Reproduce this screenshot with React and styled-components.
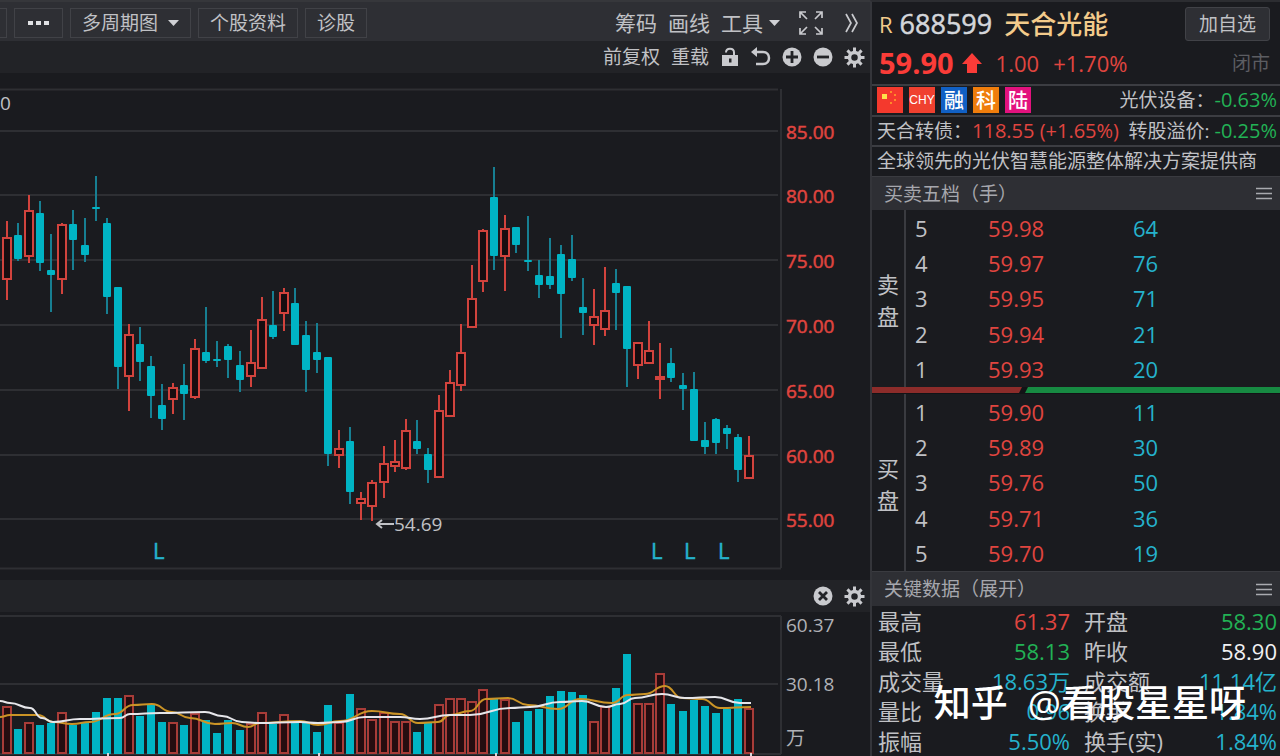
import React from "react";
import styled, { createGlobalStyle } from "styled-components";

const color = {
  bg: "#1a1b1f",
  bar: "#2e2f34",
  strip: "#222327",
  line: "#2e2f33",
  edge: "#3c3d42",
  text: "#c0c1c5",
  muted: "#a6a7ad",
  dim: "#5c5d62",
  red: "#e0453f",
  hot: "#fa3c38",
  green: "#22b255",
  cyan: "#25b2cc",
  fill: "#00b4c4",
  gold: "#f3cb8b",
};

const GlobalStyle = createGlobalStyle`
  *, *::before, *::after { box-sizing: border-box; }
  body {
    margin: 0;
    background: ${color.bg};
    color: ${color.text};
    font-family: "Open Sans", "Noto Sans CJK SC", sans-serif;
    font-size: 19px;
    line-height: 24px;
  }
  button {
    margin: 0;
    padding: 0;
    border: 0;
    background: none;
    color: inherit;
    font: inherit;
    white-space: nowrap;
    cursor: pointer;
  }
  svg { display: block; }
`;

const Page = styled.div`
  position: relative;
  display: grid;
  grid-template-columns: minmax(0, 1fr) 410px;
  min-height: 100vh;
  overflow: hidden;
`;

const ChartPane = styled.main`
  min-width: 0;
`;

const Toolbar = styled.div`
  display: flex;
  align-items: center;
  justify-content: space-between;
  height: 41px;
  padding-top: 3px;
  background: ${color.bar};
  border-top: 2px solid #36373b;
`;

const ToolGroup = styled.div`
  display: flex;
  align-items: center;
  gap: ${(p) => p.$gap}px;
  padding-right: ${(p) => p.$end || 0}px;
`;

const BoxButton = styled.button`
  display: flex;
  align-items: center;
  justify-content: center;
  gap: 10px;
  height: 30px;
  padding: 0 11px;
  border: 1px solid #414247;
  color: ${color.text};
`;

const CutButton = styled(BoxButton)`
  width: 7px;
  padding: 0;
  border-left: 0;
`;

const TextButton = styled.button`
  display: flex;
  align-items: center;
  gap: 6px;
  font-size: ${(p) => (p.$large ? 21 : 19)}px;
  color: ${color.text};
`;

const Strip = styled.div`
  display: flex;
  align-items: center;
  justify-content: flex-end;
  gap: 11px;
  height: 32px;
  padding-right: 5px;
  background: ${color.strip};
`;

const IconButton = styled.button`
  display: grid;
  place-items: center;
  color: #c9cace;
`;

const Chart = styled.svg`
  width: 100%;
  height: auto;
  font-family: "Open Sans", "Noto Sans CJK SC", sans-serif;
`;

const Quote = styled.aside`
  border-left: 2px solid #34353a;
  border-top: 2px solid #2c2d31;
`;

const QuoteHead = styled.header`
  height: 82px;
  padding: 2px 10px 0 7px;
`;

const HeadRow = styled.div`
  display: flex;
  align-items: center;
  height: 39px;
  white-space: nowrap;
`;

const Flag = styled.span`
  font-size: 22px;
  color: ${color.gold};
`;

const Code = styled.span`
  margin-left: 7px;
  font-size: 27px;
  color: #d4d6da;
  -webkit-text-stroke: 0.5px currentColor;
`;

const Name = styled.h1`
  margin: 0 auto 0 12px;
  font-size: 26px;
  font-weight: 500;
  color: ${color.gold};
`;

const AddButton = styled.button`
  height: 34px;
  padding: 0 13px;
  border: 1px solid #414247;
  border-radius: 3px;
  background: ${color.bar};
  color: ${color.text};
`;

const Last = styled.strong`
  margin-right: 8px;
  font-size: 29px;
  font-weight: 700;
  color: ${color.hot};
`;

const Change = styled.span`
  margin-left: 14px;
  font-size: 22px;
  color: ${color.red};
`;

const Status = styled.span`
  margin-left: auto;
  color: ${color.dim};
`;

const InfoRow = styled.div`
  display: flex;
  align-items: center;
  justify-content: space-between;
  height: ${(p) => (p.$tall ? 31 : 30)}px;
  padding: 0 3px 1px 5px;
  border-top: 2px solid ${color.edge};
  white-space: nowrap;
`;

const Badges = styled.div`
  display: flex;
  gap: 6px;
`;

const Badge = styled.span`
  width: 26px;
  height: 26px;
  background: ${(p) => p.$bg};
  color: #fff;
  font-family: ${(p) => (p.$latin ? '"Liberation Sans Narrow", "Liberation Sans"' : '"Noto Sans CJK SC"')}, sans-serif;
  font-size: ${(p) => (p.$latin ? 12 : 20)}px;
  font-weight: ${(p) => (p.$latin ? 400 : 500)};
  line-height: 26px;
  text-align: center;
`;

const Num = styled.span`
  font-size: 20px;
  color: ${(p) => color[p.$tone]};
`;

const SectionBar = styled.div`
  display: flex;
  align-items: center;
  justify-content: space-between;
  height: ${(p) => (p.$tall ? 35 : 34)}px;
  padding: 0 8px 0 12px;
  border-top: 1px solid #3a3b40;
  background: ${color.bar};
`;

const SectionTitle = styled.h2`
  margin: 0;
  font-size: 19px;
  font-weight: 400;
  color: ${color.muted};
`;

const Side = styled.section`
  display: grid;
  grid-template-columns: 34px minmax(0, 1fr);
  height: 177px;
`;

const SideName = styled.div`
  display: flex;
  flex-direction: column;
  justify-content: center;
  align-items: center;
  padding-top: 2px;
  border-right: 2px solid #3a3b40;
  font-size: 22px;
  line-height: 32px;
`;

const Book = styled.table`
  width: 100%;
  border-collapse: collapse;
  table-layout: fixed;
  font-size: 22px;
`;

const Cell = styled.td`
  height: 35px;
  padding: 0 0 0 ${(p) => p.$pad || 0}px;
  width: ${(p) => (p.$w ? `${p.$w}px` : "auto")};
  color: ${(p) => color[p.$tone]};
`;

const Ratio = styled.div`
  display: flex;
  height: 7px;
  padding-bottom: 1px;
  background: #121316;
`;

const RatioPart = styled.div`
  flex: ${(p) => p.$share} 1 0;
  background: ${(p) => p.$bg};
  clip-path: ${(p) =>
    p.$lead
      ? "polygon(0 0, 100% 0, calc(100% - 3px) 100%, 0 100%)"
      : "polygon(6px 0, 100% 0, 100% 100%, 3px 100%)"};
`;

const Stats = styled.table`
  width: 100%;
  border-collapse: collapse;
  table-layout: fixed;
  font-size: 22px;
  white-space: nowrap;
`;

const StatName = styled.th`
  width: ${(p) => p.$w}px;
  height: 30px;
  padding: 0 0 1px 6px;
  font-weight: 400;
  text-align: left;
`;

const StatValue = styled.td`
  padding: 0 ${(p) => p.$end}px 1px 0;
  text-align: right;
  color: ${(p) => color[p.$tone] || "#f1f1f3"};
`;

const Watermark = styled.div`
  position: absolute;
  right: 34px;
  bottom: 29px;
  display: flex;
  gap: 20px;
  font-size: 37px;
  font-weight: 500;
  line-height: 48px;
  color: #fff;
  white-space: nowrap;
  pointer-events: none;
`;

/* [rising, high, body top, body bottom, low, volume top] */
const days = [
  [1, 221, 237, 279, 300, 707], [0, 223, 235, 259, 261, 729], [1, 195, 210, 256, 263, 723],
  [0, 201, 213, 263, 271, 725], [0, 234, 270, 275, 312, 723], [1, 223, 224, 279, 294, 713],
  [0, 210, 224, 240, 270, 725], [0, 218, 245, 255, 262, 723], [0, 176, 207, 209, 221, 712],
  [0, 218, 223, 297, 314, 698], [0, 287, 287, 367, 389, 698], [1, 324, 334, 376, 411, 696],
  [0, 327, 344, 362, 381, 716], [0, 356, 366, 396, 418, 704], [0, 384, 405, 419, 430, 722],
  [1, 383, 387, 399, 414, 723], [0, 364, 385, 394, 420, 725], [1, 339, 348, 397, 399, 714],
  [0, 307, 352, 361, 363, 720], [0, 341, 359, 361, 367, 733], [0, 344, 346, 360, 378, 720],
  [0, 351, 365, 380, 392, 730], [1, 330, 362, 376, 387, 724], [1, 297, 319, 368, 368, 713],
  [0, 291, 325, 337, 339, 724], [1, 288, 292, 313, 331, 715], [0, 288, 303, 345, 345, 722],
  [0, 321, 335, 370, 392, 723], [0, 323, 352, 360, 373, 732], [0, 357, 357, 454, 466, 705],
  [1, 430, 448, 455, 468, 723], [0, 427, 441, 492, 504, 694], [1, 492, 498, 503, 520, 709],
  [1, 480, 482, 506, 521, 720], [1, 446, 463, 482, 498, 713], [1, 440, 461, 466, 472, 722],
  [1, 419, 430, 468, 470, 722], [0, 420, 441, 449, 454, 732], [0, 448, 454, 470, 483, 722],
  [1, 395, 410, 477, 477, 705], [1, 370, 382, 416, 416, 699], [1, 324, 352, 385, 391, 699],
  [1, 265, 298, 327, 327, 702], [1, 229, 230, 281, 292, 690], [0, 167, 197, 256, 270, 698],
  [1, 215, 228, 256, 291, 700], [0, 227, 227, 245, 253, 722], [0, 216, 260, 262, 271, 711],
  [0, 260, 275, 285, 298, 709], [0, 238, 276, 285, 289, 696], [0, 245, 254, 294, 338, 691],
  [0, 235, 259, 278, 281, 692], [0, 278, 307, 313, 335, 695], [1, 289, 316, 325, 345, 722],
  [1, 267, 310, 329, 336, 707], [0, 269, 283, 293, 330, 688], [0, 286, 286, 349, 387, 654],
  [1, 342, 342, 365, 379, 704], [1, 321, 350, 363, 363, 704], [1, 343, 376, 379, 399, 674],
  [0, 348, 363, 378, 382, 704], [0, 373, 385, 389, 410, 711], [0, 372, 389, 441, 441, 700],
  [0, 422, 440, 447, 454, 706], [0, 418, 419, 443, 454, 713], [0, 425, 428, 434, 449, 709],
  [0, 434, 437, 470, 482, 699], [1, 436, 455, 478, 478, 709],
];
const dayX = (i) => Math.round(7 + (i * 742) / 67);

const whiteAverage = [
  [0, 701], [10, 703], [30, 708], [42, 718], [53, 722], [80, 719], [120, 718], [130, 714], [160, 713],
  [205, 712], [222, 716], [242, 722], [258, 723], [300, 722], [318, 723], [340, 722], [365, 717],
  [400, 717], [420, 719], [450, 715], [470, 715], [510, 708], [530, 707], [560, 702], [582, 701],
  [606, 707], [620, 704], [635, 698], [662, 694], [685, 698], [715, 697], [740, 703], [751, 703],
];
const goldAverage = [
  [0, 717], [10, 715], [38, 715], [53, 722], [72, 724], [90, 722], [115, 714], [133, 705], [152, 704],
  [172, 712], [190, 718], [215, 724], [232, 723], [248, 727], [260, 723], [300, 721], [318, 725],
  [340, 721], [372, 711], [400, 714], [418, 723], [438, 722], [450, 715], [470, 711], [486, 699],
  [508, 698], [528, 705], [558, 709], [580, 699], [612, 703], [628, 695], [645, 694], [665, 686],
  [682, 698], [702, 699], [720, 708], [751, 707],
];

const smooth = (pts) =>
  pts.reduce((d, [x, y], i) => {
    if (i === 0) return `M${x} ${y}`;
    const [px, py] = pts[i - 1];
    const mx = (px + x) / 2;
    return `${d}C${mx} ${py} ${mx} ${y} ${x} ${y}`;
  }, "");

const prices = [
  [131, "85.00"], [195, "80.00"], [260, "75.00"], [325, "70.00"],
  [390, "65.00"], [455, "60.00"], [519, "55.00"],
];

function Candle({ x, day }) {
  const [up, high, top, bottom, low] = day;
  if (up) {
    const flat = bottom - top < 4;
    return (
      <g stroke="#d2433d" strokeWidth="2" fill="none">
        <path d={`M${x} ${high}V${top}M${x} ${bottom}V${low}`} />
        <rect x={x - 4} y={top + 1} width="8" height={Math.max(bottom - top - 1, 1)} fill={flat ? color.hot : "#170d10"} />
      </g>
    );
  }
  return (
    <g>
      <path d={`M${x} ${high}V${low}`} stroke="#177f92" strokeWidth="2" />
      <rect x={x - 4} y={top} width="8" height={bottom - top} rx="1" fill={color.fill} />
    </g>
  );
}

function PriceChart() {
  return (
    <Chart viewBox="0 73 870 507" role="img" aria-label="K线图">
      <path d="M0 89.500H778M781 89V568M0 568.500H781" stroke={color.line} strokeWidth="2" fill="none" />
      {prices.map(([y, label]) => (
        <g key={label}>
          <path d={`M0 ${y}H778`} stroke={color.line} strokeWidth="2" />
          <text x="786" y={y + 8} fontSize="19" fill={color.red} stroke={color.red} strokeWidth="0.500">{label}</text>
        </g>
      ))}
      <text x="0" y="110" fontSize="19" fill={color.text}>0</text>
      {days.map((day, i) => <Candle key={i} x={dayX(i)} day={day} />)}
      <path d="M378 524H394M382 520L377 524L382 528" stroke={color.text} strokeWidth="2" fill="none" />
      <text x="394" y="531" fontSize="19" fill={color.text}>54.69</text>
      {[153, 651, 684, 718].map((x) => (
        <text key={x} x={x} y="559" fontSize="22" fill={color.cyan} stroke={color.cyan} strokeWidth="0.500">L</text>
      ))}
    </Chart>
  );
}

function VolumeChart() {
  return (
    <Chart viewBox="0 612 870 144" role="img" aria-label="成交量图">
      <path d="M0 616H781M0 684H778M781 616V754M0 754H781" stroke={color.line} strokeWidth="2" fill="none" />
      {days.map((day, i) => {
        const x = dayX(i);
        const top = day[5];
        return day[0] ? (
          <rect key={i} x={x - 4} y={top} width="8" height={753 - top} fill="#250d10" stroke="#a83c38" strokeWidth="2" />
        ) : (
          <rect key={i} x={x - 4} y={top} width="8" height={754 - top} fill={color.fill} />
        );
      })}
      <path d={smooth(goldAverage)} stroke="#cb9426" strokeWidth="2" fill="none" />
      <path d={smooth(whiteAverage)} stroke="#e6e6ea" strokeWidth="2" fill="none" />
      <path d="M108 753V756M319 753V756M496 753V756M751 753V756" stroke="#d8d8dc" strokeWidth="2" />
      <g fontSize="19" fill="#b0b1b6">
        <text x="786" y="632">60.37</text>
        <text x="786" y="691">30.18</text>
        <text x="786" y="745">万</text>
      </g>
    </Chart>
  );
}

const Caret = () => (
  <svg width="11" height="6" viewBox="0 0 11 6" aria-hidden="true"><path d="M0 0H11L5.500 6Z" fill="#d0d1d5" /></svg>
);

const Dots = () => (
  <svg width="25" height="4" viewBox="0 0 25 4" aria-hidden="true">
    <path d="M2 0H7V4H2ZM10 0H15V4H10ZM18 0H23V4H18Z" fill="#e0e1e4" />
  </svg>
);

const Expand = () => (
  <svg width="24" height="24" viewBox="0 0 24 24" fill="none" stroke="currentColor" strokeWidth="1.700" aria-hidden="true">
    <path d="M1 7V1H7M1 1L8 8M17 1H23V7M23 1L16 8M1 17V23H7M1 23L8 16M17 23H23V17M23 23L16 16" />
  </svg>
);

const Chevrons = () => (
  <svg width="14" height="20" viewBox="0 0 14 20" fill="none" stroke="currentColor" strokeWidth="1.700" aria-hidden="true">
    <path d="M1 1L6 10L1 19M7 1L12 10L7 19" />
  </svg>
);

const Lock = () => (
  <svg width="20" height="20" viewBox="0 0 20 20" aria-hidden="true">
    <path d="M6 5.500C6 0.500 14 0.500 14 5.500V9" fill="none" stroke="currentColor" strokeWidth="2" />
    <path fillRule="evenodd" d="M2 8H18V19H2ZM9 11.500V15.500H11.500V11.500Z" fill="currentColor" />
  </svg>
);

const Undo = () => (
  <svg width="20" height="20" viewBox="0 0 20 20" aria-hidden="true">
    <path d="M4 5H12C20 5 20 17 12 17H5" fill="none" stroke="currentColor" strokeWidth="2.500" />
    <path d="M0 5L6 0V10Z" fill="currentColor" />
  </svg>
);

const Disc = ({ mark }) => (
  <svg width="20" height="20" viewBox="0 0 20 20" aria-hidden="true">
    <circle cx="10" cy="10" r="9.500" fill="currentColor" />
    <path d={mark} stroke={color.strip} strokeWidth="2.800" />
  </svg>
);

const Gear = () => (
  <svg width="21" height="21" viewBox="0 0 21 21" aria-hidden="true">
    <g stroke="currentColor" strokeWidth="3">
      {[0, 45, 90, 135].map((a) => (
        <path key={a} d="M10.500 0.500V6M10.500 15V20.500" transform={`rotate(${a} 10.500 10.500)`} />
      ))}
    </g>
    <circle cx="10.500" cy="10.500" r="5" fill="none" stroke="currentColor" strokeWidth="3.500" />
  </svg>
);

const Menu = () => (
  <svg width="16" height="13" viewBox="0 0 16 13" aria-hidden="true">
    <path d="M0 1.500H16M0 6.500H16M0 11.500H16" stroke="#a9aaaf" strokeWidth="1.600" />
  </svg>
);

const RiseArrow = () => (
  <svg width="20" height="20" viewBox="0 0 20 20" aria-hidden="true">
    <path d="M10 0L20 11H15V20H5V11H0Z" fill={color.hot} />
  </svg>
);

const ChinaFlag = () => (
  <svg width="26" height="26" viewBox="0 0 26 26" aria-hidden="true">
    <path d="M5 7H10V12H5Z" fill="#ffe14a" />
    <path d="M13 4H15V6H13ZM17 7H19V9H17ZM17 12H19V14H17ZM13 15H15V17H13Z" fill="#ff8a2a" />
  </svg>
);

function BookSide({ name, rows }) {
  return (
    <Side>
      <SideName>
        {[...name].map((c) => <span key={c}>{c}</span>)}
      </SideName>
      <Book>
        <tbody>
          {rows.map(([level, price, lots]) => (
            <tr key={level}>
              <Cell $w={82} $pad={9} $tone="text">{level}</Cell>
              <Cell $w={145} $tone="red">{price}</Cell>
              <Cell $tone="cyan">{lots}</Cell>
            </tr>
          ))}
        </tbody>
      </Book>
    </Side>
  );
}

const sells = [[5, "59.98", 64], [4, "59.97", 76], [3, "59.95", 71], [2, "59.94", 21], [1, "59.93", 20]];
const buys = [[1, "59.90", 11], [2, "59.89", 30], [3, "59.76", 50], [4, "59.71", 36], [5, "59.70", 19]];
const stats = [
  ["最高", "61.37", "red", "开盘", "58.30", "green"],
  ["最低", "58.13", "green", "昨收", "58.90", "white"],
  ["成交量", "18.63万", "cyan", "成交额", "11.14亿", "cyan"],
  ["量比", "0.96", "cyan", "换手", "1.84%", "cyan"],
  ["振幅", "5.50%", "cyan", "换手(实)", "1.84%", "cyan"],
];

export default function App() {
  return (
    <>
      <GlobalStyle />
      <Page>
        <ChartPane>
          <Toolbar>
            <ToolGroup $gap={7}>
              <CutButton aria-label="周期" />
              <BoxButton aria-label="更多"><Dots /></BoxButton>
              <BoxButton>多周期图 <Caret /></BoxButton>
              <BoxButton>个股资料</BoxButton>
              <BoxButton>诊股</BoxButton>
            </ToolGroup>
            <ToolGroup $gap={19} $end={11}>
              <ToolGroup $gap={11}>
                <TextButton $large>筹码</TextButton>
                <TextButton $large>画线</TextButton>
                <TextButton $large>工具 <Caret /></TextButton>
              </ToolGroup>
              <ToolGroup $gap={22}>
                <IconButton aria-label="全屏"><Expand /></IconButton>
                <IconButton aria-label="展开"><Chevrons /></IconButton>
              </ToolGroup>
            </ToolGroup>
          </Toolbar>
          <Strip>
            <TextButton>前复权</TextButton>
            <TextButton>重载</TextButton>
            <IconButton aria-label="解锁"><Lock /></IconButton>
            <IconButton aria-label="撤销"><Undo /></IconButton>
            <IconButton aria-label="放大"><Disc mark="M4 10H16M10 4V16" /></IconButton>
            <IconButton aria-label="缩小"><Disc mark="M4 10H16" /></IconButton>
            <IconButton aria-label="设置"><Gear /></IconButton>
          </Strip>
          <PriceChart />
          <Strip>
            <IconButton aria-label="关闭"><Disc mark="M6 6L14 14M14 6L6 14" /></IconButton>
            <IconButton aria-label="设置"><Gear /></IconButton>
          </Strip>
          <VolumeChart />
        </ChartPane>

        <Quote>
          <QuoteHead>
            <HeadRow>
              <Flag>R</Flag>
              <Code>688599</Code>
              <Name>天合光能</Name>
              <AddButton>加自选</AddButton>
            </HeadRow>
            <HeadRow>
              <Last>59.90</Last>
              <RiseArrow />
              <Change>1.00</Change>
              <Change>+1.70%</Change>
              <Status>闭市</Status>
            </HeadRow>
          </QuoteHead>
          <InfoRow $tall>
            <Badges>
              <Badge $bg="#f4392d"><ChinaFlag /></Badge>
              <Badge $bg="#f0402f" $latin>CHY</Badge>
              <Badge $bg="#1160c4">融</Badge>
              <Badge $bg="#ef7d0c">科</Badge>
              <Badge $bg="#e3127e">陆</Badge>
            </Badges>
            <span>光伏设备：<Num $tone="green">-0.63%</Num></span>
          </InfoRow>
          <InfoRow>
            <span>天合转债：<Num $tone="red">118.55 (+1.65%)</Num></span>
            <span>转股溢价: <Num $tone="green">-0.25%</Num></span>
          </InfoRow>
          <InfoRow $tall>全球领先的光伏智慧能源整体解决方案提供商</InfoRow>
          <SectionBar>
            <SectionTitle>买卖五档（手）</SectionTitle>
            <IconButton aria-label="五档菜单"><Menu /></IconButton>
          </SectionBar>
          <BookSide name="卖盘" rows={sells} />
          <Ratio>
            <RatioPart $lead $share={150} $bg="#8c2c2a" />
            <RatioPart $share={258} $bg="#178a42" />
          </Ratio>
          <BookSide name="买盘" rows={buys} />
          <SectionBar $tall>
            <SectionTitle>关键数据（展开）</SectionTitle>
            <IconButton aria-label="数据菜单"><Menu /></IconButton>
          </SectionBar>
          <Stats>
            <tbody>
              {stats.map(([a, av, at, b, bv, bt]) => (
                <tr key={a}>
                  <StatName $w={96} scope="row">{a}</StatName>
                  <StatValue $end={8} $tone={at}>{av}</StatValue>
                  <StatName $w={92} scope="row">{b}</StatName>
                  <StatValue $end={3} $tone={bt}>{bv}</StatValue>
                </tr>
              ))}
            </tbody>
          </Stats>
        </Quote>
        <Watermark><span>知乎</span><span>@看股星星呀</span></Watermark>
      </Page>
    </>
  );
}
